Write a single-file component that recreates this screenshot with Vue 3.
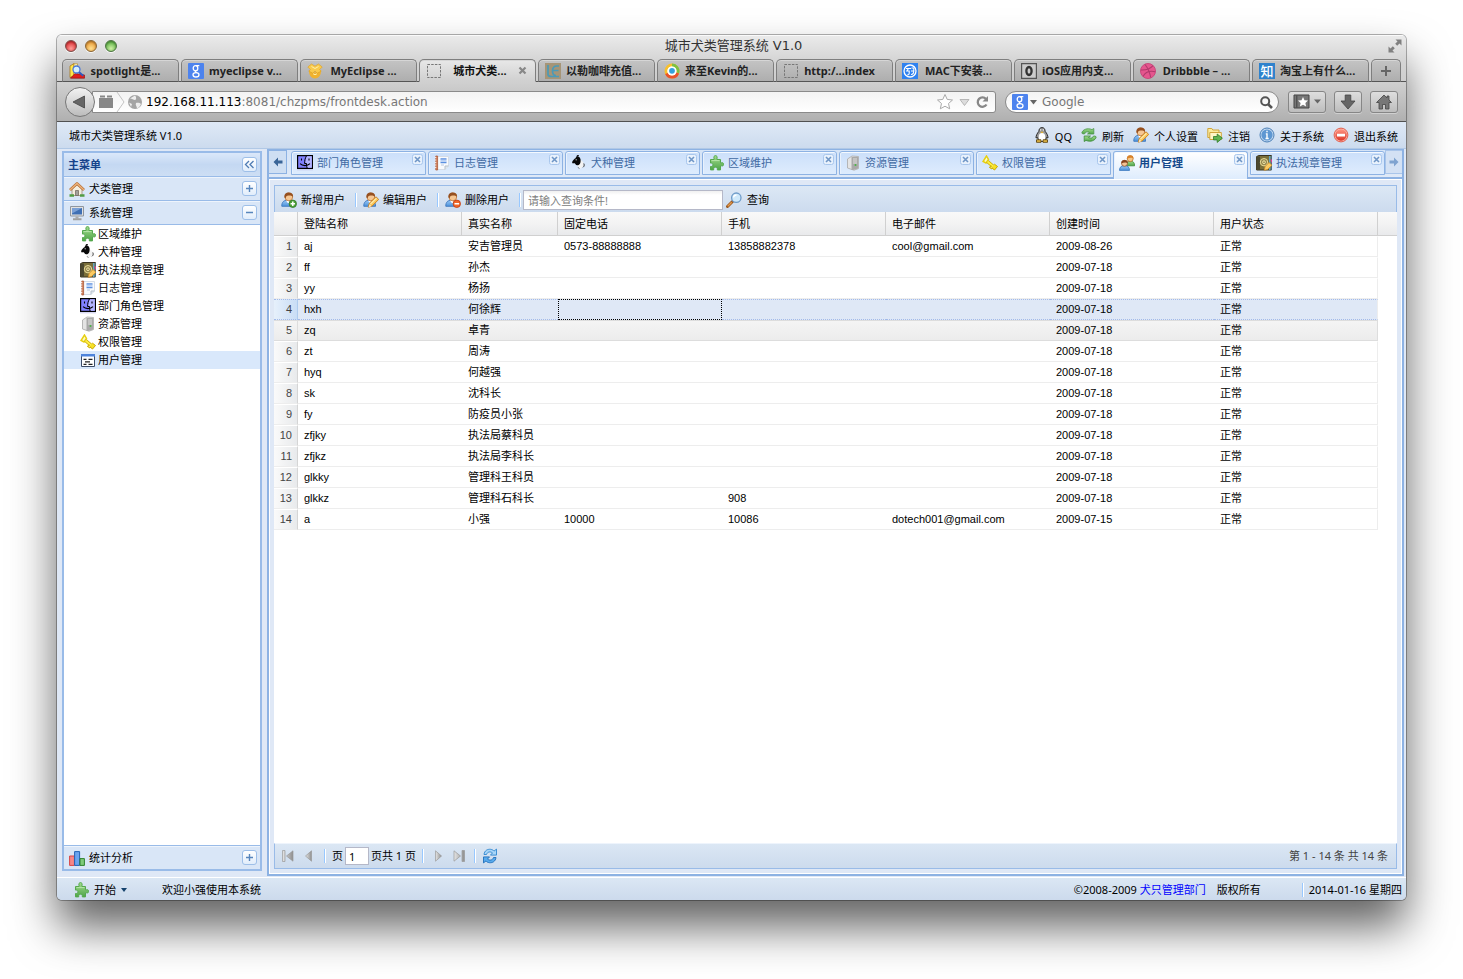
<script setup>
import { ref } from 'vue'

const browserTabs = [
  { icon: 'fav-spot', label: 'spotlight是...' },
  { icon: 'fav-google', label: 'myeclipse v...' },
  { icon: 'fav-box', label: 'MyEclipse ...' },
  { icon: 'fav-blank', label: '城市犬类...', active: true },
  { icon: 'fav-le', label: '以勒咖啡充值...' },
  { icon: 'fav-ring', label: '来至Kevin的...' },
  { icon: 'fav-blank', label: 'http:/...index' },
  { icon: 'fav-mac', label: 'MAC下安装...' },
  { icon: 'fav-ios', label: 'iOS应用内支...' },
  { icon: 'fav-ball', label: 'Dribbble – ...' },
  { glyph: '知', label: '淘宝上有什么...' },
]

const actions = [
  { icon: 'penguin', label: 'QQ' },
  { icon: 'sync', label: '刷新' },
  { icon: 'user-edit', label: '个人设置' },
  { icon: 'folder-go', label: '注销' },
  { icon: 'info', label: '关于系统' },
  { icon: 'minus', label: '退出系统' },
]

const menu = [
  { icon: 'puzzle', label: '区域维护' },
  { icon: 'dog', label: '犬种管理' },
  { icon: 'book', label: '执法规章管理' },
  { icon: 'note', label: '日志管理' },
  { icon: 'face', label: '部门角色管理' },
  { icon: 'server', label: '资源管理' },
  { icon: 'key', label: '权限管理' },
  { icon: 'form', label: '用户管理', active: true },
]

const pageTabs = [
  { icon: 'face', label: '部门角色管理' },
  { icon: 'note', label: '日志管理' },
  { icon: 'dog', label: '犬种管理' },
  { icon: 'puzzle', label: '区域维护' },
  { icon: 'server', label: '资源管理' },
  { icon: 'key', label: '权限管理' },
  { icon: 'group', label: '用户管理', active: true },
  { icon: 'book', label: '执法规章管理' },
]

const tools = [
  { icon: 'user-add', label: '新增用户' },
  { icon: 'user-edit', label: '编辑用户' },
  { icon: 'user-del', label: '删除用户' },
]

const columns = ['登陆名称', '真实名称', '固定电话', '手机', '电子邮件', '创建时间', '用户状态']

const rows = [
  ['aj', '安吉管理员', '0573-88888888', '13858882378', 'cool@gmail.com', '2009-08-26', '正常'],
  ['ff', '孙杰', '', '', '', '2009-07-18', '正常'],
  ['yy', '杨扬', '', '', '', '2009-07-18', '正常'],
  ['hxh', '何徐辉', '', '', '', '2009-07-18', '正常'],
  ['zq', '卓青', '', '', '', '2009-07-18', '正常'],
  ['zt', '周涛', '', '', '', '2009-07-18', '正常'],
  ['hyq', '何越强', '', '', '', '2009-07-18', '正常'],
  ['sk', '沈科长', '', '', '', '2009-07-18', '正常'],
  ['fy', '防疫员小张', '', '', '', '2009-07-18', '正常'],
  ['zfjky', '执法局蔡科员', '', '', '', '2009-07-18', '正常'],
  ['zfjkz', '执法局李科长', '', '', '', '2009-07-18', '正常'],
  ['glkky', '管理科王科员', '', '', '', '2009-07-18', '正常'],
  ['glkkz', '管理科石科长', '', '908', '', '2009-07-18', '正常'],
  ['a', '小强', '10000', '10086', 'dotech001@gmail.com', '2009-07-15', '正常'],
]

const selected = ref(3)
const hovered = ref(4)
const query = ref('')
const page = ref('1')
const address = ref('')
</script>

<template>
  <div class="desktop">
    <svg class="sprite" aria-hidden="true">
      <defs>
        <linearGradient id="gGreen" x1="0" y1="0" x2="0" y2="1"><stop offset="0" stop-color="#a2db8e" /><stop offset="1" stop-color="#4fa548" /></linearGradient>
        <linearGradient id="gBlue" x1="0" y1="0" x2="0" y2="1"><stop offset="0" stop-color="#9cc8f4" /><stop offset="1" stop-color="#4a92dc" /></linearGradient>
        <linearGradient id="gRed" x1="0" y1="0" x2="0" y2="1"><stop offset="0" stop-color="#ff9583" /><stop offset="1" stop-color="#dc3526" /></linearGradient>
        <linearGradient id="gGrey" x1="0" y1="0" x2="1" y2="0"><stop offset="0" stop-color="#e6e6e6" /><stop offset="1" stop-color="#8e8e8e" /></linearGradient>
      </defs>
      <symbol id="person" viewBox="0 0 16 16">
        <path d="M.8 14.300C.6 10.500 2.500 8.200 6.500 8.200s6.300 2.300 6 6.100z" fill="url(#gBlue)" stroke="#3f78bd" stroke-width=".9" />
        <path d="M5 8.500l2.200 3 2.300-3z" fill="#fff" />
        <circle cx="7.800" cy="4.900" r="3.900" fill="#f6c793" stroke="#b9733a" stroke-width=".8" />
        <path d="M3.600 5.800C2.800 1.800 5 .4 7.800.4c3 0 4.600 1.600 4.200 4.600C11 3.300 9.500 3.400 7.500 3.400 5.500 3.400 5 4.400 4.700 6.200z" fill="#96501f" />
      </symbol>
      <symbol id="user-add" viewBox="0 0 16 16">
        <use href="#person" />
        <circle cx="11.800" cy="11.800" r="3.700" fill="#4fa33c" stroke="#2f7a25" stroke-width=".8" />
        <path d="M11.800 9.600v4.400M9.600 11.800h4.400" stroke="#fff" stroke-width="1.500" />
      </symbol>
      <symbol id="user-del" viewBox="0 0 16 16">
        <use href="#person" />
        <circle cx="11.800" cy="11.800" r="3.700" fill="#f0682a" stroke="#c23b12" stroke-width=".8" />
        <path d="M9.500 11.800h4.600" stroke="#fff" stroke-width="1.600" />
      </symbol>
      <symbol id="user-edit" viewBox="0 0 16 16">
        <use href="#person" />
        <path d="M5.300 15.200l1-3.900 6.700-6.500 2.700 2.600-6.500 6.600z" fill="#fbc658" stroke="#c67d1c" stroke-width=".9" />
        <path d="M7.500 12l6-5.800" stroke="#fdeaa8" stroke-width="1.200" />
        <path d="M5.500 15.200l1-3 2 2z" fill="#fbe8c8" />
      </symbol>
      <symbol id="group" viewBox="0 0 16 16">
        <path d="M7 10.800C7 7.300 8.500 6.200 11.300 6.200s4.300 1.200 4.300 4.600z" fill="url(#gGreen)" stroke="#3a8a35" stroke-width=".8" />
        <circle cx="11.200" cy="3.700" r="3" fill="#f6c584" stroke="#b66c23" stroke-width=".7" />
        <path d="M8 4C7.800 1.200 9.300.3 11.300.3c2.100 0 3.400 1.100 3.100 3.500-1-1.400-4.200-1.400-6.400.2z" fill="#d98229" />
        <path d="M.5 15.400C.5 11.900 2.500 10.600 5.500 10.600s5 1.300 5 4.800z" fill="url(#gBlue)" stroke="#3a77bd" stroke-width=".8" />
        <circle cx="5.500" cy="8.300" r="3" fill="#f3c294" stroke="#8a4a20" stroke-width=".7" />
        <path d="M2.400 8.600C2 5.900 3.500 5 5.600 5c2.100 0 3.400 1.100 3.100 3.500-1-1.400-4.200-1.400-6.300.1z" fill="#87441e" />
      </symbol>
      <symbol id="penguin" viewBox="0 0 16 16">
        <path d="M8 .6C5.800.6 4.900 2.300 4.900 4.300 3 6.500 1.900 9 2 11l1.500-.6C4 13 5.500 14.500 8 14.500s4-1.500 4.500-4.100l1.500.6c.1-2-1-4.500-2.900-6.700C11.100 2.300 10.200.6 8 .6z" fill="#999" stroke="#2d2d2d" />
        <ellipse cx="8" cy="10" rx="3.300" ry="3.900" fill="#fff" />
        <circle cx="6.900" cy="3" r="1" fill="#fff" /><circle cx="9.100" cy="3" r="1" fill="#fff" />
        <circle cx="7.100" cy="3.100" r=".5" /><circle cx="8.900" cy="3.100" r=".5" />
        <path d="M6.300 4.700h3.400L8 6.200z" fill="#f2b61c" />
        <path d="M2.500 12.800h4.500v2.500h-4.500zM9 12.800h4.500v2.500H9z" fill="#edc14a" stroke="#5d4510" stroke-width=".9" />
      </symbol>
      <symbol id="sync" viewBox="0 0 16 16">
        <path d="M.8 6C1.500 2.500 6.500.6 11 2.600L12.800 1.500V7H6.500l2-1.500C6.500 4.300 4.500 4.800 4.200 6.300c-1 .9-3 .8-3.400-.3z" fill="url(#gGreen)" stroke="#4b9647" stroke-width=".8" />
        <path d="M15.200 10c-.7 3.500-5.700 5.400-10.200 3.400L3.200 14.500V9h6.300l-2 1.500c2 1.200 4 .7 4.300-.8 1-.9 3-.8 3.400.3z" fill="url(#gGreen)" stroke="#3c8b38" stroke-width=".8" />
      </symbol>
      <symbol id="folder-go" viewBox="0 0 16 16">
        <path d="M.8 10.500v-9h4l1 1.500h6.200v7.500z" fill="#fbeb9d" stroke="#d0a43a" />
        <path d="M2.800 12.500v-7h11.500v7z" fill="#fff6c5" stroke="#d0a43a" />
        <path d="M6.500 9.500h3.700V7l5.200 4.200-5.200 4.200v-2.500H6.500z" fill="#62b450" stroke="#2f7a25" stroke-width=".8" />
      </symbol>
      <symbol id="info" viewBox="0 0 16 16">
        <circle cx="8" cy="8" r="7" fill="#c3d9f0" stroke="#4b7fb6" />
        <circle cx="8" cy="8" r="5.600" fill="#5e97d2" />
        <path d="M8 3.700v1.600M6.800 6.900H8v4.500M6.500 11.500h3.200" stroke="#fff" stroke-width="1.400" fill="none" />
      </symbol>
      <symbol id="minus" viewBox="0 0 16 16">
        <circle cx="8" cy="8" r="6.900" fill="#fbb5aa" stroke="#e0604f" />
        <circle cx="8" cy="8" r="5.800" fill="url(#gRed)" />
        <path d="M4 6.700h8v2.700H4z" fill="#fff" />
      </symbol>
      <symbol id="puzzle" viewBox="0 0 16 16">
        <path d="M2.500 4.500H6V3.200C5.500 1.600 6.300.6 7.500.6s2 1 1.500 2.600v1.300h3.500v3.300h1.200c1.200-.4 1.900.3 1.900 1.500s-.7 1.900-1.900 1.500h-1.200v4.100H9.300v-1.200c0-1-.8-1.500-1.800-1.500s-1.800.5-1.800 1.500v1.200H2.500v-3.400h.9c1 0 1.500-.8 1.500-1.700s-.5-1.700-1.500-1.700h-.9z" fill="url(#gGreen)" stroke="#55a84e" />
        <path d="M3.500 5.600h8" stroke="#c3ecb6" stroke-width=".8" />
      </symbol>
      <symbol id="dog" viewBox="0 0 16 16">
        <path d="M8 5c4 .2 5 3 4.500 6L9 14 5 9z" fill="#f3f3f3" />
        <path d="M1 7.200C2 5 3.300 4 4.500 3.300 5 1.500 6.500 1 8 1.800c1.800 1.200 2 4.200 1.300 6.200-.8 2.200-3.700 3.200-4.800 1.300C4.200 8.300 3.500 7.900 1.800 8.500z" fill="#080808" />
        <path d="M6.300 2.500C5.800 1.200 6.500.3 7.800.3" fill="none" stroke="#111" stroke-width="1.200" />
        <path d="M12.800 8.500c.8 1.700.3 3-.8 3.800M7.300 12.500l.8 1" fill="none" stroke="#333" />
        <path d="M4.700 4.800h1" stroke="#fff" />
      </symbol>
      <symbol id="book" viewBox="0 0 16 16">
        <path d="M.6 1.500L3 .5h12.400V15H.6z" fill="#7a6f3a" stroke="#3a3420" />
        <path d="M1 1.500h3V15H1z" fill="#4b4830" />
        <path d="M13.500 1v14M15 1v14" stroke="#5db4e8" stroke-width=".8" />
        <circle cx="8" cy="7.200" r="3.700" fill="#958750" stroke="#e9dd99" stroke-width="1" />
        <circle cx="8" cy="7.200" r="1.400" fill="none" stroke="#efe4a5" />
        <path d="M8.200 15.300l1-4L13 7.500l3 2.700-4.500 4.300z" fill="#fbcb62" stroke="#c98a2a" stroke-width=".8" />
        <path d="M14.300 4.500H16v4z" fill="#e43e8b" />
      </symbol>
      <symbol id="note" viewBox="0 0 16 16">
        <path d="M3.500 1.500h11V11l-3.500 3.500H3.500z" fill="#f8fafd" stroke="#d5dce6" />
        <path d="M14.500 11H11v3.500" fill="#dfe5ec" stroke="#b6c1cc" />
        <path d="M1.800 1h1.800v14H1.800z" fill="#d98a66" stroke="#a9502c" stroke-width=".7" />
        <path d="M.8 2.500h1.500M.8 5h1.500M.8 7.500h1.500M.8 10h1.500M.8 12.500h1.500" stroke="#fff" stroke-width=".8" />
        <path d="M6.500 4h6M6.500 7.500h6" stroke="#5a8fe0" stroke-width="1.400" /><path d="M6.500 5.700h6" stroke="#b8d0f5" stroke-width="2" /><path d="M7 10h3" stroke="#b8c8e0" />
      </symbol>
      <symbol id="face" viewBox="0 0 16 16">
        <path d="M.6.600h14.800v12.800H.6z" fill="#8080ff" stroke="#000" stroke-width="1.200" />
        <path d="M9.500 1.200h5.300v11.600h-4.600l-.5-4H8z" fill="#b4b4ff" />
        <path d="M9.500.8C8 3.500 7.600 5.500 7.600 8.500h1.900c0 2 .2 3.500.8 5" fill="none" stroke="#000" />
        <path d="M4.500 3.500v2M12 3.500v2M3 8.700c2.500 2.600 7.500 2.600 10 0" fill="none" stroke="#000" stroke-width="1.100" />
        <path d="M0 14.800h16" stroke="#c8c8ee" />
      </symbol>
      <symbol id="server" viewBox="0 0 16 16">
        <path d="M2.500 4L7 1l6.500.5v12L9 15.200 2.500 13z" fill="#e4e4e4" stroke="#b0b0b0" stroke-width=".9" />
        <path d="M6.500 2h6.500v11.500L8 15H6.500z" fill="#a9a9a9" />
        <path d="M8 4h4M8 6h4M8 8h4" stroke="#dedede" /><circle cx="10.500" cy="10" r="1" fill="#48b642" />
      </symbol>
      <symbol id="key" viewBox="0 0 16 16">
        <path d="M4.500 1L6.500 4.500 4 8 1 6.500z" fill="#fffbc0" stroke="#e6cf10" stroke-width="1.500" />
        <path d="M5.500 6.500l7 6" stroke="#c9a900" stroke-width="3.400" />
        <path d="M5.500 6.500l7 6" stroke="#fff045" stroke-width="1.800" />
        <path d="M9 10.500l-1.500 2 2.500 1.500M12.300 9l3.200 2.500-3 3.500-2.500-2" fill="#f7e126" stroke="#c9a900" />
      </symbol>
      <symbol id="form" viewBox="0 0 16 16">
        <path d="M1.500 2.500h13v12h-13z" fill="#fff" stroke="#3c4c68" />
        <path d="M1 2h14v2.500H1z" fill="#4e84dc" />
        <path d="M3.500 7.300h3M8.500 7.300h4M5 9.800h5M3.500 12.300h3M8.500 12.300h4" stroke="#222" stroke-width="1.200" />
      </symbol>
      <symbol id="house" viewBox="0 0 16 16">
        <path d="M3 8v6.500h10V8L8 3.500z" fill="#f5eede" stroke="#aaa08e" />
        <path d="M6.500 14.500v-5h3v5z" fill="#a3a09c" stroke="#6c6258" stroke-width=".7" />
        <path d="M1 9l7-6.500L15 9" fill="none" stroke="#b5713a" stroke-width="2.800" stroke-linejoin="round" />
        <path d="M1 9l7-6.500L15 9" fill="none" stroke="#eeb27a" stroke-width="1.300" />
        <path d="M.5 14.500H5M11 14.500h4.500" stroke="#519c43" stroke-width="2.500" />
      </symbol>
      <symbol id="computer" viewBox="0 0 16 16">
        <path d="M1.500 1.500h13v9.500h-13z" fill="#e2e2e2" stroke="#8f969f" />
        <path d="M3 3h10v6.500H3z" fill="#3e6fb4" /><path d="M3 3h10L3 8.500z" fill="#7aa0d6" />
        <path d="M6.500 11.500h3v2h-3z" fill="#aaa" /><path d="M4 14.200h8.500" stroke="#9f9f9f" stroke-width="2" />
      </symbol>
      <symbol id="chart" viewBox="0 0 16 16">
        <path d="M.6 6h4.800v9.400H.6z" fill="#f68888" stroke="#d84444" />
        <path d="M5.600 1.600h5v13.800h-5z" fill="#6ba4ef" stroke="#2463b5" />
        <path d="M11 8.600h4.400v6.800H11z" fill="#7fcb7a" stroke="#2f8230" />
      </symbol>
      <symbol id="magnifier" viewBox="0 0 16 16">
        <path d="M1.500 14.500l5-5" stroke="#9a5923" stroke-width="3" stroke-linecap="round" /><path d="M1.700 14.300l4-4" stroke="#e69b4a" stroke-width="1.300" />
        <circle cx="10.300" cy="5.700" r="4.700" fill="#cfe9fb" stroke="#6f9cc9" stroke-width="1.300" />
        <path d="M7.500 5.500c.3-1.700 1.400-2.500 3-2.500" stroke="#fff" stroke-width="1.300" fill="none" />
      </symbol>
      <symbol id="reload" viewBox="0 0 16 16">
        <path d="M2 6.500C2.500 2.500 5.500 1 8.500 1.300c1.800.2 2.800.9 3.500 1.800l2.500-2v6H8.500l2-2.200C8.500 3.300 5.500 3.500 4.500 6.500z" fill="#a8d6f8" stroke="#2f86cf" stroke-width=".9" />
        <path d="M14 9.500c-.5 4-3.500 5.500-6.500 5.200-1.800-.2-2.800-.9-3.500-1.800l-2.500 2v-6h6l-2 2.200c2 1.600 5 1.400 6-1.600z" fill="#59abed" stroke="#1f6eba" stroke-width=".9" />
      </symbol>
      <symbol id="fav-spot" viewBox="0 0 16 16">
        <path d="M1 3l4-2.500V13l-4 1.500z" fill="#ffe64b" stroke="#a8761a" stroke-width=".8" />
        <path d="M5 .8h3.500v11H5z" fill="#fff6b8" stroke="#b38117" stroke-width=".6" />
        <path d="M1.500 15.200L6 10.500l9.500 1.500v3.200z" fill="#e01f1d" stroke="#8a0909" stroke-width=".6" />
        <circle cx="7.500" cy="6.500" r="3.500" fill="#d5efff" stroke="#4a78d8" stroke-width="1.300" />
        <path d="M10.200 9.200l4 3.500" stroke="#2f58c0" stroke-width="1.800" />
      </symbol>
      <symbol id="fav-google" viewBox="0 0 16 16">
        <path d="M1 0h14a1 1 0 0 1 1 1v14a1 1 0 0 1-1 1H1a1 1 0 0 1-1-1V1a1 1 0 0 1 1-1z" fill="#4d83ee" />
        <ellipse cx="7.500" cy="5.300" rx="2.300" ry="2.600" fill="none" stroke="#fff" stroke-width="1.300" />
        <path d="M8 2.600h3.300M9 7.200C6.500 8 7 9 8.700 9.600" fill="none" stroke="#fff" stroke-width="1.100" />
        <ellipse cx="8" cy="11.800" rx="3" ry="2.200" fill="none" stroke="#fff" stroke-width="1.300" />
      </symbol>
      <symbol id="fav-box" viewBox="0 0 16 16">
        <path d="M2 7L8 9.500 14 7c.3 5-2 8.300-6 8.600C4 15.300 1.700 12 2 7z" fill="#f0b22f" />
        <path d="M.8 4l3.700-3L8 3.200 11.500 1l3.700 3-2.500 2.500 1.500 1.700-4 2L8 8l-2.200 2.200-4-2L3.300 6.500z" fill="#f9ca4d" stroke="#de9d1d" stroke-width=".6" />
        <path d="M4.500 3.500L8 5.500l3.500-2M6 10.500c1 1.500 3 1.500 4 0" stroke="#fff0a8" fill="none" />
      </symbol>
      <symbol id="fav-blank" viewBox="0 0 16 16">
        <path d="M1.500 1.500h13v13h-13z" fill="none" stroke="#777" stroke-dasharray="2.500 1.200" />
      </symbol>
      <symbol id="fav-le" viewBox="0 0 16 16">
        <path d="M0 0h16v16H0z" fill="#a69577" />
        <path d="M3 2v9.500c0 1.500 1 2 3.500 2H14M14 3h-2c-3.500 0-4.500 2-4.500 5s1 4.500 3.500 4.500M8 7.500h5.500" fill="none" stroke="#4b9ab8" stroke-width="1.700" />
      </symbol>
      <symbol id="fav-ring" viewBox="0 0 16 16">
        <circle cx="8" cy="8" r="6" fill="#fff" stroke="#f7c02d" stroke-width="3" />
        <path d="M8 2a6 6 0 0 1 5.700 7.700" fill="none" stroke="#7ec142" stroke-width="3" />
        <path d="M13.700 10A6 6 0 0 1 2.500 10.500" fill="none" stroke="#e9532c" stroke-width="3" />
        <circle cx="8" cy="8" r="4.600" fill="#fff" /><circle cx="8" cy="7.800" r="2.900" fill="#35a2dc" />
      </symbol>
      <symbol id="fav-mac" viewBox="0 0 16 16">
        <path d="M0 0h16v16H0z" fill="#2f82f0" />
        <circle cx="8" cy="8" r="6" fill="none" stroke="#fff" stroke-width="1.300" />
        <path d="M4 5.500h5M6.500 5.500L4.800 8h2.400v2.500c0 1-.7 1.500-2 1.500M9.500 5h2.300v2.800c0 2.500-.8 3.700-2.800 3.700M9 8h3" fill="none" stroke="#fff" stroke-width="1.100" />
      </symbol>
      <symbol id="fav-ios" viewBox="0 0 16 16">
        <path d="M.6.600h14.800v14.800H.6z" fill="#ccc" stroke="#555" stroke-width="1.200" />
        <ellipse cx="8" cy="8" rx="2.600" ry="4" fill="none" stroke="#333" stroke-width="2.300" />
      </symbol>
      <symbol id="fav-ball" viewBox="0 0 16 16">
        <circle cx="8" cy="8" r="7.500" fill="#e5568e" stroke="#c94a7c" />
        <path d="M.8 7c5 .3 9-.8 12.300-4.300M5 1.500c3 3.500 4.500 7 5.700 13M3 13.500c2.500-4.500 7-6 12.300-4.700" fill="none" stroke="#b03a6c" stroke-width="1.100" />
      </symbol>
    </svg>

    <div class="window">
      <header class="titlebar">
        <div class="lights">
          <button class="light red" aria-label="关闭"></button>
          <button class="light amber" aria-label="最小化"></button>
          <button class="light green" aria-label="缩放"></button>
        </div>
        <span class="title">城市犬类管理系统 V1.0</span>
        <button class="expand" aria-label="全屏">
          <svg width="14" height="14" viewBox="0 0 14 14" fill="#808080"><path d="M7.500.500h6v6l-2-2-2.300 2.300-2-2L9.500 2.500zM6.500 13.500h-6v-6l2 2 2.300-2.300 2 2L4.500 11.500z" /></svg>
        </button>
      </header>

      <nav class="btabs">
        <button v-for="t in browserTabs" :key="t.label" class="btab" :class="{ on: t.active }">
          <span v-if="t.glyph" class="glyph" aria-hidden="true">{{ t.glyph }}</span>
          <svg v-else class="i16"><use :href="'#' + t.icon" /></svg>
          <span class="btext">{{ t.label }}</span>
          <svg v-if="t.active" class="bclose" width="9" height="9" viewBox="0 0 9 9"><path d="M1.500 1.500l6 6M7.500 1.500l-6 6" stroke="#888" stroke-width="2.200" /></svg>
          <span v-else class="bclose"></span>
        </button>
        <button class="btab plus" aria-label="新标签页">
          <svg width="12" height="12" viewBox="0 0 12 12"><path d="M6 1v10M1 6h10" stroke="#666" stroke-width="2" /></svg>
        </button>
      </nav>

      <div class="navbar">
        <button class="back" aria-label="后退">
          <svg width="14" height="14" viewBox="0 0 14 14"><path d="M12.500 1v12L1 7z" fill="#666" stroke="#444" stroke-width=".8" /></svg>
        </button>
        <div class="url">
          <svg class="urlicon" width="50" height="20" viewBox="0 0 50 20">
            <path d="M6 3.500h5v2H6zM13 3.500h5v2h-5zM5 6h14v10H5z" fill="#888" />
            <path d="M23 0l7 10-7 10" fill="none" stroke="#c4c4c4" />
            <circle cx="41" cy="10" r="7" fill="#a4a4a4" />
            <path d="M36 6.500c2 0 3.500 1.500 5 1.500S42.500 5 41 3.500M42 11c2-.5 4 0 5 1-1 2.500-2 3.500-4 4.500 0-2-2-3.500-1-5.500zM35 10.500l3 1.500-1 3" fill="#ededed" />
          </svg>
          <span class="address"><b>192.168.11.113</b>:8081/chzpms/frontdesk.action</span>
          <svg class="urlend" width="56" height="20" viewBox="0 0 56 20">
            <path d="M9 2.500l2.200 4.900 5.300.6-4 3.500 1.200 5.300L9 14.200l-4.700 2.600 1.200-5.300-4-3.500 5.300-.6z" fill="#fff" stroke="#aaa" />
            <path d="M24 7.500h9l-4.500 6z" fill="#ddd" stroke="#aaa" stroke-width=".8" />
            <path d="M50 7A4.700 4.700 0 1 0 50.500 12.500" fill="none" stroke="#888" stroke-width="2.300" /><path d="M46.500 9.500H52V4z" fill="#888" />
          </svg>
        </div>
        <label class="search">
          <svg class="i16"><use href="#fav-google" /></svg>
          <svg width="7" height="5" viewBox="0 0 7 5"><path d="M0 0h7L3.500 4.500z" fill="#666" /></svg>
          <input v-model="address" type="text" placeholder="Google" aria-label="Google" />
          <svg width="13" height="13" viewBox="0 0 13 13"><circle cx="5.200" cy="5.200" r="4" fill="none" stroke="#555" stroke-width="2" /><path d="M8 8l4 4" stroke="#555" stroke-width="2.600" /></svg>
        </label>
        <button class="nbtn wide" aria-label="书签">
          <svg width="28" height="16" viewBox="0 0 28 16"><path d="M1 1h15v13H1z" fill="#777" stroke="#444" /><path d="M3.800 1.500v12" stroke="#444" /><path d="M10 3l1.500 3.200 3.500.4-2.600 2.400.7 3.500L10 10.800 6.900 12.500l.7-3.500L5 6.600l3.500-.4z" fill="#fff" /><path d="M21 5.500h7L24.500 9.500z" fill="#666" /></svg>
        </button>
        <button class="nbtn" aria-label="下载">
          <svg width="16" height="16" viewBox="0 0 16 16"><path d="M5.200 1h5.600v6H15l-7 8-7-8h4.200z" fill="#666" stroke="#444" stroke-width=".8" /></svg>
        </button>
        <button class="nbtn" aria-label="主页">
          <svg width="16" height="16" viewBox="0 0 16 16"><path d="M8 1L.5 8.500H3V15h3.500v-4.500h3V15H13V8.500h2.500L13 6V2h-2v2z" fill="#777" stroke="#444" stroke-width=".8" /></svg>
        </button>
      </div>

      <div class="apphead">
        <span>城市犬类管理系统 V1.0</span>
        <div class="actions">
          <button v-for="a in actions" :key="a.label" class="act"><svg class="i16"><use :href="'#' + a.icon" /></svg><span>{{ a.label }}</span></button>
        </div>
      </div>

      <div class="main">
        <aside class="side">
          <div class="sidehead"><span>主菜单</span>
            <button class="tool" aria-label="折叠"><svg width="13" height="13" viewBox="0 0 13 13"><path d="M6 3L2.500 6.500 6 10M10.500 3L7 6.500l3.500 3.500" fill="none" stroke="#4f7cb3" stroke-width="1.300" /></svg></button>
          </div>
          <div class="acc"><svg class="i16"><use href="#house" /></svg><span>犬类管理</span>
            <button class="tool" aria-label="展开犬类管理"><svg width="13" height="13" viewBox="0 0 13 13"><path d="M6.500 3v7M3 6.500h7" stroke="#5886bd" stroke-width="1.400" /></svg></button>
          </div>
          <div class="acc"><svg class="i16"><use href="#computer" /></svg><span>系统管理</span>
            <button class="tool" aria-label="收起系统管理"><svg width="13" height="13" viewBox="0 0 13 13"><path d="M3 6.500h7" stroke="#5886bd" stroke-width="1.400" /></svg></button>
          </div>
          <ul class="tree">
            <li v-for="m in menu" :key="m.label"><a href="#" :class="{ on: m.active }"><svg class="i16"><use :href="'#' + m.icon" /></svg>{{ m.label }}</a></li>
          </ul>
          <div class="acc last"><svg class="i16"><use href="#chart" /></svg><span>统计分析</span>
            <button class="tool" aria-label="展开统计分析"><svg width="13" height="13" viewBox="0 0 13 13"><path d="M6.500 3v7M3 6.500h7" stroke="#5886bd" stroke-width="1.400" /></svg></button>
          </div>
        </aside>

        <section class="center">
          <div class="strip">
            <button class="scroll" aria-label="向左"><svg width="10" height="10" viewBox="0 0 10 10"><path d="M5 .500v3h4.500v3H5v3L.5 5z" fill="#3a6598" /></svg></button>
            <div class="ptabs">
              <div v-for="t in pageTabs" :key="t.label" class="ptab" :class="{ on: t.active }">
                <button class="plabel"><svg class="i16"><use :href="'#' + t.icon" /></svg>{{ t.label }}</button>
                <button class="pclose" :aria-label="'关闭' + t.label"><svg width="11" height="11" viewBox="0 0 11 11"><rect x=".5" y=".5" width="10" height="10" rx="2" fill="#e8f1fc" stroke="#a9c7ed" /><path d="M3 3l5 5M8 3L3 8" stroke="#6f96c6" stroke-width="1.600" /></svg></button>
              </div>
            </div>
            <button class="scroll off" aria-label="向右"><svg width="10" height="10" viewBox="0 0 10 10"><path d="M5 .500v3H.5v3H5v3L9.500 5z" fill="#7fa3d0" /></svg></button>
          </div>

          <div class="body">
            <div class="grid">
              <div class="toolbar">
                <template v-for="t in tools" :key="t.label">
                  <button class="tbtn"><svg class="i16"><use :href="'#' + t.icon" /></svg><span>{{ t.label }}</span></button>
                  <i class="sep"></i>
                </template>
                <input v-model="query" class="query" type="text" placeholder="请输入查询条件!" aria-label="查询条件" />
                <button class="tbtn find"><svg class="i16"><use href="#magnifier" /></svg><span>查询</span></button>
              </div>

              <table>
                <colgroup>
                  <col class="cnum" /><col /><col class="cname" /><col /><col /><col /><col /><col /><col class="cend" />
                </colgroup>
                <thead>
                  <tr><th></th><th v-for="c in columns" :key="c">{{ c }}</th><th></th></tr>
                </thead>
                <tbody>
                  <tr v-for="(r, i) in rows" :key="i" :class="{ sel: i === selected, over: i === hovered }" @click="selected = i">
                    <td class="num">{{ i + 1 }}</td>
                    <td v-for="(c, j) in r" :key="j" :class="{ focus: i === selected && j === 2 }">{{ c }}</td>
                    <td class="tail"></td>
                  </tr>
                </tbody>
              </table>

              <div class="pager">
                <button class="pg" aria-label="首页"><svg width="12" height="12" viewBox="0 0 12 12" fill="url(#gGrey)" stroke="#999" stroke-width=".7"><path d="M.5.500H3v11H.5zM11 .8v10.400L4.500 6z" /></svg></button>
                <button class="pg" aria-label="上一页"><svg width="12" height="12" viewBox="0 0 12 12" fill="url(#gGrey)" stroke="#999" stroke-width=".7"><path d="M8.500.800v10.400L2.500 6z" /></svg></button>
                <i class="sep"></i>
                <label class="pgin">页<input v-model="page" type="text" /></label>
                <span class="pgof">页共 1 页</span>
                <i class="sep"></i>
                <button class="pg" aria-label="下一页"><svg width="12" height="12" viewBox="0 0 12 12" fill="url(#gGrey)" stroke="#999" stroke-width=".7"><path d="M3.500.800v10.400L9.500 6z" /></svg></button>
                <button class="pg" aria-label="末页"><svg width="12" height="12" viewBox="0 0 12 12" fill="url(#gGrey)" stroke="#999" stroke-width=".7"><path d="M9 .5h2.500v11H9zM1 .8v10.400L7.500 6z" /></svg></button>
                <i class="sep"></i>
                <button class="pg" aria-label="刷新列表"><svg class="i16"><use href="#reload" /></svg></button>
                <span class="total">第 1 - 14 条 共 14 条</span>
              </div>
            </div>
          </div>
        </section>
      </div>

      <footer class="foot">
        <button class="start"><svg class="i16"><use href="#puzzle" /></svg><span>开始</span><svg width="6" height="4" viewBox="0 0 6 4"><path d="M0 0h6L3 4z" fill="#15426c" /></svg></button>
        <span class="hello">欢迎小强使用本系统</span>
        <span class="copy">©2008-2009 <a href="#">犬只管理部门</a></span>
        <span class="rights">版权所有</span>
        <i class="sep"></i>
        <span class="date">2014-01-16 星期四</span>
      </footer>
    </div>
  </div>
</template>

<style>
html, body { margin: 0; background: #fff; }
</style>

<style scoped>
.desktop { box-sizing: border-box; min-height: 100vh; padding: 35px 57px 79px; display: flex; overflow: hidden; font: 11px/16px "Noto Sans", "Noto Sans CJK SC", sans-serif; color: #000; }
button, input { font: inherit; color: inherit; margin: 0; padding: 0; border: 0; background: none; box-sizing: border-box; }
input { outline: 0; min-width: 0; }
button { cursor: pointer; white-space: nowrap; }
svg { display: block; flex: none; }
.sprite { position: absolute; width: 0; height: 0; }
.i16 { width: 16px; height: 16px; }
.window { flex: 1; min-width: 0; display: flex; flex-direction: column; border-radius: 5px; overflow: hidden; background: #dfe8f6; box-shadow: 0 0 0 1px rgba(0,0,0,.3), 0 27px 45px rgba(0,0,0,.62); }

.titlebar { display: grid; grid-template-columns: 1fr auto 1fr; align-items: center; height: 24px; box-sizing: border-box; padding: 0 4px 2px 8px; background: linear-gradient(#ebebeb, #d6d6d6); box-shadow: inset 0 1px #fafafa; }
.lights { display: flex; gap: 8px; }
.light { width: 12px; height: 12px; border-radius: 50%; border: 1px solid #7c4a46; box-shadow: inset 0 1px 2px rgba(0,0,0,.35), 0 1px #f6f6f6; }
.red { background: radial-gradient(circle at 50% 75%, #ff9d98, #e0393c 70%); }
.amber { background: radial-gradient(circle at 50% 75%, #ffe08f, #eda03c 70%); border-color: #8a6432; }
.green { background: radial-gradient(circle at 50% 75%, #cff0a6, #66b84c 70%); border-color: #4b7340; }
.title { font: 13px/20px "DejaVu Sans", "Noto Sans CJK SC", sans-serif; color: #333; }
.expand { justify-self: end; }

.btabs { display: flex; gap: 2px; height: 23px; padding: 0 5px; background: linear-gradient(#d6d6d6, #cdcdcd); box-shadow: inset 0 -1px #555; }
.btab { flex: 1 1 0; min-width: 0; display: flex; align-items: center; height: 23px; padding: 0 8px 0 6px; border: 1px solid #7e7e7e; border-bottom-color: #555; border-radius: 5px 5px 0 0; background: linear-gradient(#c4c4c4, #aeaeae); box-shadow: inset 0 1px #d6d6d6; color: #222; font-weight: 700; }
.btab.on { background: linear-gradient(#e8e8e8, #d0d0d0); border-bottom-color: #d0d0d0; color: #111; }
.btext { flex: 1; min-width: 0; text-align: center; padding-left: 5px; }
.on .btext { padding-left: 0; }
.bclose { width: 9px; }
.glyph { flex: none; width: 16px; height: 16px; background: #2f82cc; color: #fff; font: 500 13px/15px "Noto Sans CJK SC", sans-serif; text-align: center; }
.btab.plus { flex: none; width: 30px; padding: 0; justify-content: center; }

.navbar { display: flex; align-items: center; height: 40px; box-sizing: border-box; padding: 1px 8px 0; background: linear-gradient(#d0d0d0, #b0b0b0); border-bottom: 1px solid #515151; font: 12px/20px "DejaVu Sans", "Noto Sans CJK SC", sans-serif; }
.back { z-index: 1; width: 30px; height: 30px; border-radius: 50%; border: 1px solid #777; background: linear-gradient(#f2f2f2, #bcbcbc); display: flex; align-items: center; justify-content: center; padding-right: 3px; }
.url { flex: 1; min-width: 0; margin-left: -3px; height: 22px; box-sizing: border-box; display: flex; align-items: center; padding: 0 3px 0 1px; border: 1px solid #8a8a8a; border-radius: 0 3px 3px 0; background: linear-gradient(#f3f3f3, #fff); }
.address { flex: 1; margin-left: 2px; color: #777; white-space: nowrap; }
.address b { font-weight: 400; color: #000; }
.search { width: 274px; box-sizing: border-box; height: 22px; margin: 0 9px; padding: 0 5px 0 6px; display: flex; align-items: center; gap: 2px; border: 1px solid #8a8a8a; border-radius: 11px; background: linear-gradient(#f3f3f3, #fff); }
.search input { flex: 1; padding-left: 3px; }
.search input::placeholder { color: #777; opacity: 1; }
.nbtn { width: 28px; height: 22px; border: 1px solid #868686; border-radius: 3px; background: linear-gradient(#dedede, #bdbdbd); box-shadow: 0 1px #d0d0d0; display: flex; align-items: center; justify-content: center; margin-left: 8px; }
.nbtn.wide { width: 38px; margin-left: 0; }

.apphead { height: 27px; display: flex; align-items: center; justify-content: space-between; padding: 1px 8px 0 12px; background: linear-gradient(#dfe9f6, #ccdbee); box-sizing: border-box; border-bottom: 1px solid #b0c8e6; }
.actions { display: flex; gap: 9px; }
.act { display: flex; align-items: flex-end; gap: 5px; height: 18px; }
.act .i16 { align-self: flex-start; }

.main { flex: 1; min-height: 0; display: flex; gap: 5px; padding: 0 2px 1px 5px; background: #dfe8f6; }
.side { width: 200px; box-sizing: border-box; flex: none; margin: 2px 0 5px; border: 2px solid #99bbe8; display: flex; flex-direction: column; background: #fff; }
.sidehead { height: 24px; box-sizing: border-box; padding: 0 3px 0 4px; display: flex; align-items: center; justify-content: space-between; color: #15428b; font-weight: 700; background: linear-gradient(#dbe8fa, #c4d8f2 50%, #cddef4); border-bottom: 1px solid #99bbe8; }
.tool { width: 15px; height: 15px; border: 1px solid #9ebfe8; border-radius: 3px; background: linear-gradient(#fff, #e1edfb); }
.acc { height: 24px; flex: none; box-sizing: border-box; padding: 0 3px 0 5px; display: flex; align-items: center; gap: 4px; background: #d9e6f7; border-bottom: 1px solid #99bbe8; box-shadow: inset 0 1px #eef4fc; }
.acc .tool { margin-left: auto; }
.acc.last { border-bottom: 0; border-top: 1px solid #99bbe8; }
.tree { flex: 1; list-style: none; margin: 0; padding: 0; }
.tree a { height: 18px; display: flex; align-items: center; gap: 2px; padding-left: 16px; color: #000; text-decoration: none; }
.tree a.on { background: #d9e8fb; }

.center { flex: 1; min-width: 0; display: flex; flex-direction: column; border: 2px solid #8db2e3; border-top-width: 1px; box-shadow: inset 1px 0 #fff; }
.strip { height: 29px; flex: none; box-sizing: border-box; display: flex; background: linear-gradient(#d5e4f7, #dfe9f7); border-bottom: 2px solid #8db2e3; }
.scroll { width: 18px; height: 24px; display: flex; align-items: center; justify-content: center; background: #cfdff3; border: 1px solid #8db2e3; border-width: 1px 1px 1px 0; flex: none; }
.scroll.off { width: 17px; border-color: #a9c5ea; border-width: 1px 0 1px 1px; background: #d3e1f4; }
.ptabs { flex: 1; min-width: 0; display: flex; gap: 2px; padding: 1px 0 0 4px; }
.ptab { flex: 1 1 0; min-width: 0; height: 24px; box-sizing: border-box; display: flex; justify-content: space-between; align-items: flex-start; padding: 0 2px 0 5px; border: 1px solid #8db2e3; border-radius: 3px 3px 0 0; background: linear-gradient(#cbdffa, #deecfd); box-shadow: inset 0 1px #f4f9ff, inset 1px 0 #e8f1fd; color: #416aa3; }
.ptab.on { height: 28px; border-bottom: 0; background: linear-gradient(#fff, #deecfd); color: #15498b; font-weight: 700; }
.plabel { height: 22px; display: flex; align-items: center; gap: 4px; }
.pclose { margin-top: 2px; }

.body { flex: 1; min-height: 0; padding: 6px 5px 5px; display: flex; background: #dfe8f6; box-shadow: inset 0 1px #fff, inset 1px 0 #fff, inset 0 -1px #fff, inset -1px 0 #fff; }
.grid { flex: 1; min-width: 0; display: flex; flex-direction: column; background: #fff; }
.toolbar { height: 27px; flex: none; box-sizing: border-box; display: flex; align-items: center; padding: 2px 7px 0 6px; border: 1px solid #99bbe8; border-bottom: 0; background: linear-gradient(#dce8f5, #ccdbee); }
.tbtn { display: flex; align-items: center; gap: 4px; }
.find { gap: 5px; margin-left: 3px; }
.sep { width: 1px; height: 14px; margin: 0 6px 0 10px; background: #98c8ff; border-right: 1px solid #fff; flex: none; }
.toolbar .sep:last-of-type { margin-right: 2px; }
.query { width: 200px; height: 20px; border: 1px solid #b5b8c8; background: linear-gradient(#f0f0f0, #fff 4px); padding: 0 4px; }
.query::placeholder { color: #808080; opacity: 1; }

table { width: 100%; table-layout: fixed; border-collapse: separate; border-spacing: 0; margin-bottom: auto; font-family: "Liberation Sans", "Noto Sans CJK SC", sans-serif; }
.cnum { width: 24px; }
.cname { width: 96px; }
.cend { width: 19px; }
th { height: 24px; box-sizing: border-box; padding: 0 6px; text-align: left; font-weight: 400; white-space: nowrap; overflow: hidden; background: linear-gradient(#f9f9f9, #f3f3f3 50%, #e9eaec); border-right: 1px solid #d0d0d0; border-bottom: 1px solid #d0d0d0; }
th:last-child { border-right: 0; }
td { height: 21px; box-sizing: border-box; padding: 0 6px 2px; line-height: 16px; white-space: nowrap; overflow: hidden; border-top: 1px solid #fff; border-bottom: 1px solid #ededed; }
td:nth-last-child(2) { border-right: 1px solid #ededed; }
td.num { padding: 0 5px 2px 0; text-align: right; color: #444; background: linear-gradient(90deg, #fafafa, #e8eaec); border-right: 1px solid #d5d5d5; }
td.tail { border-color: #fff; background: #fff; }
.sel td:not(.tail) { background: #dfe8f6; border-top: 1px dotted #a3bae9; border-bottom: 1px dotted #a3bae9; }
.sel td.num:not(.tail) { background: linear-gradient(90deg, #e6f0fb, #c9ddf6); border-right-color: #aecbee; }
.sel td.focus:not(.tail) { border: 1px dotted #000; }
.over td:not(.tail) { background: linear-gradient(#f4f4f4, #ececec); border-color: #ddd; }

.pager { height: 26px; flex: none; box-sizing: border-box; display: flex; align-items: center; padding: 0 8px 0 7px; border: 1px solid #99bbe8; border-top: 1px solid #eef4fc; background: linear-gradient(#dbe7f4, #ccdbed); }
.pg { display: flex; margin-right: 9px; }
.pager .sep { margin: 0 6px 0 0; }
.pager .pgof + .sep { margin: 0 8px 0 6px; }
.pgin { display: flex; align-items: center; gap: 2px; }
.pgin input { width: 24px; height: 18px; border: 1px solid #b5b8c8; background: #fff; padding: 0 3px; }
.pgof { margin-left: 2px; }
.total { margin-left: auto; color: #444; }

.foot { height: 23px; flex: none; box-sizing: border-box; display: flex; align-items: center; padding: 2px 4px 0 16px; border-top: 1px solid #fff; background: linear-gradient(#dbe7f4, #ccdaec); white-space: nowrap; }
.start { display: flex; align-items: center; gap: 5px; }
.hello { margin-left: 35px; }
.copy { margin-left: auto; }
.copy a { color: #00f; text-decoration: none; }
.rights { margin-left: 11px; }
.foot .sep { margin: 0 5px 0 41px; }
</style>
